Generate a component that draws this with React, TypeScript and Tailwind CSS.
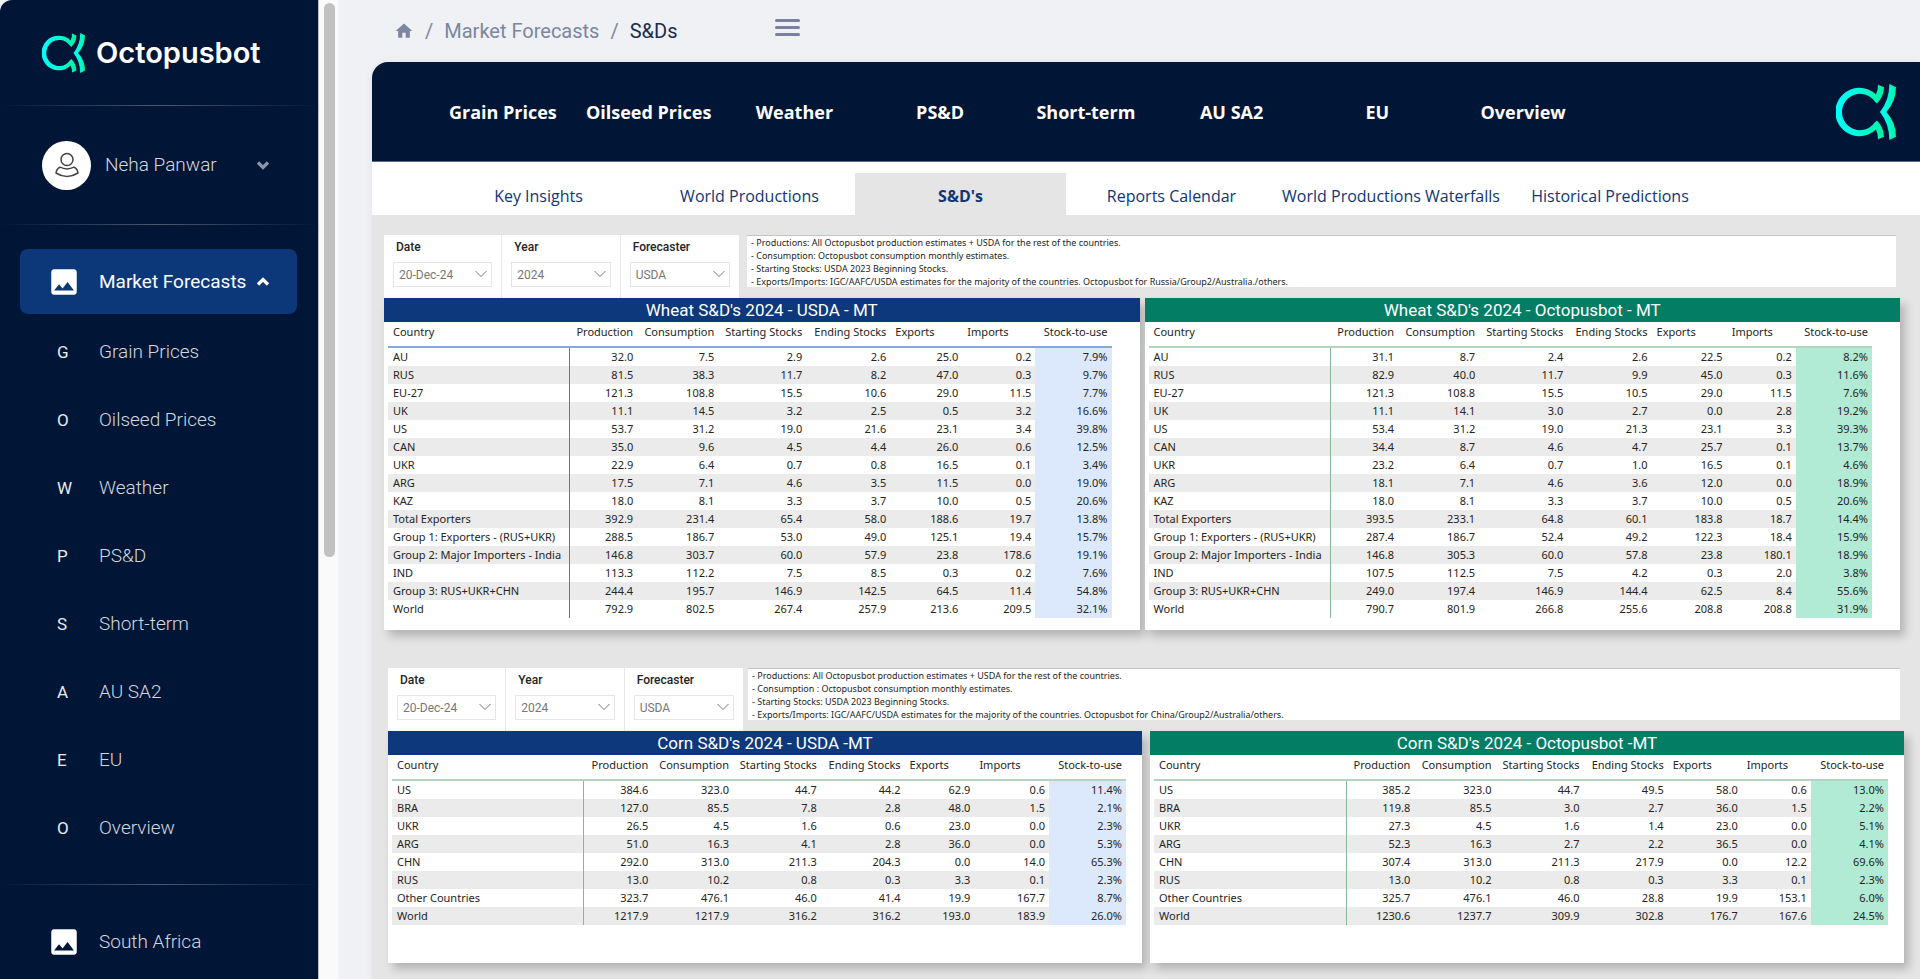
import React, { useId } from "react";
import { MdImage, MdHome } from "react-icons/md";
import { ChevronDown, ChevronUp } from "lucide-react";

type Row = [string, string, string, string, string, string, string, string];

const HEADERS = ["Country", "Production", "Consumption", "Starting Stocks", "Ending Stocks", "Exports", "Imports", "Stock-to-use"];

const WHEAT_USDA: Row[] = [
  ["AU", "32.0", "7.5", "2.9", "2.6", "25.0", "0.2", "7.9%"],
  ["RUS", "81.5", "38.3", "11.7", "8.2", "47.0", "0.3", "9.7%"],
  ["EU-27", "121.3", "108.8", "15.5", "10.6", "29.0", "11.5", "7.7%"],
  ["UK", "11.1", "14.5", "3.2", "2.5", "0.5", "3.2", "16.6%"],
  ["US", "53.7", "31.2", "19.0", "21.6", "23.1", "3.4", "39.8%"],
  ["CAN", "35.0", "9.6", "4.5", "4.4", "26.0", "0.6", "12.5%"],
  ["UKR", "22.9", "6.4", "0.7", "0.8", "16.5", "0.1", "3.4%"],
  ["ARG", "17.5", "7.1", "4.6", "3.5", "11.5", "0.0", "19.0%"],
  ["KAZ", "18.0", "8.1", "3.3", "3.7", "10.0", "0.5", "20.6%"],
  ["Total Exporters", "392.9", "231.4", "65.4", "58.0", "188.6", "19.7", "13.8%"],
  ["Group 1: Exporters - (RUS+UKR)", "288.5", "186.7", "53.0", "49.0", "125.1", "19.4", "15.7%"],
  ["Group 2: Major Importers - India", "146.8", "303.7", "60.0", "57.9", "23.8", "178.6", "19.1%"],
  ["IND", "113.3", "112.2", "7.5", "8.5", "0.3", "0.2", "7.6%"],
  ["Group 3: RUS+UKR+CHN", "244.4", "195.7", "146.9", "142.5", "64.5", "11.4", "54.8%"],
  ["World", "792.9", "802.5", "267.4", "257.9", "213.6", "209.5", "32.1%"],
];

const WHEAT_OCTO: Row[] = [
  ["AU", "31.1", "8.7", "2.4", "2.6", "22.5", "0.2", "8.2%"],
  ["RUS", "82.9", "40.0", "11.7", "9.9", "45.0", "0.3", "11.6%"],
  ["EU-27", "121.3", "108.8", "15.5", "10.5", "29.0", "11.5", "7.6%"],
  ["UK", "11.1", "14.1", "3.0", "2.7", "0.0", "2.8", "19.2%"],
  ["US", "53.4", "31.2", "19.0", "21.3", "23.1", "3.3", "39.3%"],
  ["CAN", "34.4", "8.7", "4.6", "4.7", "25.7", "0.1", "13.7%"],
  ["UKR", "23.2", "6.4", "0.7", "1.0", "16.5", "0.1", "4.6%"],
  ["ARG", "18.1", "7.1", "4.6", "3.6", "12.0", "0.0", "18.9%"],
  ["KAZ", "18.0", "8.1", "3.3", "3.7", "10.0", "0.5", "20.6%"],
  ["Total Exporters", "393.5", "233.1", "64.8", "60.1", "183.8", "18.7", "14.4%"],
  ["Group 1: Exporters - (RUS+UKR)", "287.4", "186.7", "52.4", "49.2", "122.3", "18.4", "15.9%"],
  ["Group 2: Major Importers - India", "146.8", "305.3", "60.0", "57.8", "23.8", "180.1", "18.9%"],
  ["IND", "107.5", "112.5", "7.5", "4.2", "0.3", "2.0", "3.8%"],
  ["Group 3: RUS+UKR+CHN", "249.0", "197.4", "146.9", "144.4", "62.5", "8.4", "55.6%"],
  ["World", "790.7", "801.9", "266.8", "255.6", "208.8", "208.8", "31.9%"],
];

const CORN_USDA: Row[] = [
  ["US", "384.6", "323.0", "44.7", "44.2", "62.9", "0.6", "11.4%"],
  ["BRA", "127.0", "85.5", "7.8", "2.8", "48.0", "1.5", "2.1%"],
  ["UKR", "26.5", "4.5", "1.6", "0.6", "23.0", "0.0", "2.3%"],
  ["ARG", "51.0", "16.3", "4.1", "2.8", "36.0", "0.0", "5.3%"],
  ["CHN", "292.0", "313.0", "211.3", "204.3", "0.0", "14.0", "65.3%"],
  ["RUS", "13.0", "10.2", "0.8", "0.3", "3.3", "0.1", "2.3%"],
  ["Other Countries", "323.7", "476.1", "46.0", "41.4", "19.9", "167.7", "8.7%"],
  ["World", "1217.9", "1217.9", "316.2", "316.2", "193.0", "183.9", "26.0%"],
];

const CORN_OCTO: Row[] = [
  ["US", "385.2", "323.0", "44.7", "49.5", "58.0", "0.6", "13.0%"],
  ["BRA", "119.8", "85.5", "3.0", "2.7", "36.0", "1.5", "2.2%"],
  ["UKR", "27.3", "4.5", "1.6", "1.4", "23.0", "0.0", "5.1%"],
  ["ARG", "52.3", "16.3", "2.7", "2.2", "36.5", "0.0", "4.1%"],
  ["CHN", "307.4", "313.0", "211.3", "217.9", "0.0", "12.2", "69.6%"],
  ["RUS", "13.0", "10.2", "0.8", "0.3", "3.3", "0.1", "2.3%"],
  ["Other Countries", "325.7", "476.1", "46.0", "28.8", "19.9", "153.1", "6.0%"],
  ["World", "1230.6", "1237.7", "309.9", "302.8", "176.7", "167.6", "24.5%"],
];

function LogoMark({ className }: { className: string }) {
  const id = useId();
  return (
    <svg viewBox="30 32 180 166" preserveAspectRatio="none" className={className} aria-hidden="true">
      <defs>
        <linearGradient id={id} x1="0" y1="0" x2="1" y2="0">
          <stop offset="0" stopColor="#00ffff" />
          <stop offset="0.5" stopColor="#00fbd8" />
          <stop offset="1" stopColor="#00f3a2" />
        </linearGradient>
      </defs>
      <g fill={`url(#${id})`}>
        <path d="M156 34 L174 42 Q174 68 153 90 L146 84 A54 54 0 1 0 146 146 L153 140 Q174 162 174 188 L156 196 Q156 180 150 167 A72 72 0 1 1 150 63 Q156 50 156 34Z" />
        <path d="M190 32 L210 42 Q210 84 181 115 Q210 146 210 188 L190 198 Q190 150 162 115 Q190 80 190 32Z" />
      </g>
    </svg>
  );
}

function Divider() {
  return <div className="h-px shrink-0 bg-linear-to-r from-transparent via-[#4a5873] to-transparent" />;
}

const MENU = ["Grain Prices", "Oilseed Prices", "Weather", "PS&D", "Short-term", "AU SA2", "EU", "Overview"];

function Sidebar() {
  return (
    <aside className="w-[318px] shrink-0 rounded-tl-xl bg-[#011637] text-[#d3d7df]">
      <div className="flex h-[105px] items-center gap-[11px] pl-[42px]">
        <LogoMark className="h-10 w-[43px]" />
        <span className="font-['Inter'] text-[29px] leading-8 font-semibold text-white">Octopusbot</span>
      </div>
      <Divider />
      <button type="button" className="flex h-[118px] w-full items-center pr-[45px] pl-[42px] text-left">
        <span className="flex size-[49px] items-center justify-center rounded-full bg-white">
          <svg viewBox="0 0 24 26" className="h-[26px] w-6" fill="none" stroke="#444" strokeWidth="1.5" strokeLinejoin="round" aria-hidden="true">
            <circle cx="12" cy="7.5" r="6" />
            <path d="M5 15.2 Q12 18.6 19 15.2 Q22.5 16.8 23 21 Q17.500 24.500 12 24.500 Q6.500 24.500 1 21 Q1.500 16.800 5 15.200Z" />
          </svg>
        </span>
        <span className="ml-[14px] flex-1 text-[19px] leading-6 font-light">Neha Panwar</span>
        <ChevronDown className="size-5 text-[#8a94a8]" strokeWidth={4} strokeLinecap="butt" strokeLinejoin="miter" />
      </button>
      <Divider />
      <nav className="pt-6">
        <button type="button" className="mx-5 flex h-[65px] w-[277px] items-center rounded-lg bg-[#0c3779] pl-[27px] text-left text-white">
          <MdImage className="size-[34px]" />
          <span className="ml-[18px] w-[149px] text-[19px] leading-6 whitespace-nowrap">Market Forecasts</span>
          <ChevronUp className="ml-[5px] size-5" strokeWidth={4} strokeLinecap="butt" strokeLinejoin="miter" />
        </button>
        <ul className="pt-1">
          {MENU.map((item) => (
            <li key={item}>
              <a href="#" className="flex h-[68px] items-center pl-[57px] text-[19px] leading-6 font-light">
                <span className="w-[42px] text-[17px] font-normal text-[#e9ebef]">{item[0]}</span>
                {item}
              </a>
            </li>
          ))}
        </ul>
        <div className="h-[22px]" />
        <Divider />
        <a href="#" className="mt-[19px] flex h-[75px] items-center pl-[47px] text-[19px] leading-6 font-light">
          <MdImage className="size-[34px] text-white" />
          <span className="ml-[18px]">South Africa</span>
        </a>
      </nav>
    </aside>
  );
}

function Filter({ id, label, value }: { id: string; label: string; value: string }) {
  return (
    <div className="border-r border-[#e9e9e9] px-[9px] last:border-r-0">
      <label htmlFor={id} className="block h-[27px] pl-[3px] text-[12px] leading-6 font-medium text-[#252423]">
        {label}
      </label>
      <div className="relative">
        <select id={id} defaultValue={value} className="block h-[25px] w-full appearance-none border border-[#e6e6e6] bg-white pl-[5px] text-[12px] text-[#777]">
          <option>{value}</option>
        </select>
        <svg viewBox="0 0 12 8" className="pointer-events-none absolute top-2 right-[5px] h-2 w-3" fill="none" stroke="#777" strokeWidth="1" aria-hidden="true">
          <path d="M0.500 1 L6 6.500 L11.500 1" />
        </svg>
      </div>
    </div>
  );
}

function FilterRow({ name, notes, gap }: { name: string; notes: string[]; gap: string }) {
  return (
    <div className={`flex h-[63px] ${gap}`}>
      <div className="grid w-[355px] shrink-0 grid-cols-3 bg-white">
        <Filter id={`${name}-date`} label="Date" value="20-Dec-24" />
        <Filter id={`${name}-year`} label="Year" value="2024" />
        <Filter id={`${name}-forecaster`} label="Forecaster" value="USDA" />
      </div>
      <div className="mr-1 h-[52px] flex-1 overflow-hidden border-t border-[#c4c4c4] bg-white pl-1 font-['Noto_Sans'] text-[9px] leading-[13px] text-[#252423]">
        {notes.map((note) => (
          <p key={note}>{note}</p>
        ))}
      </div>
    </div>
  );
}

type CardProps = {
  title: string;
  rows: Row[];
  widths: number[];
  green?: boolean;
  greenRule?: boolean;
  pad: string;
  tablePad: string;
};

function DataCard({ title, rows, widths, green = false, greenRule = false, pad, tablePad }: CardProps) {
  const total = widths.reduce((sum, w) => sum + w, 0);
  const line = greenRule ? "border-b-[#b3d5bf]" : "border-b-[#86a8dc]";
  const divider = greenRule ? "border-r-[#83bb96]" : "border-r-[#4a7dc9]";
  return (
    <section className={`min-w-0 bg-white shadow-[5px_6px_9px_rgba(0,0,0,0.22)] ${pad}`}>
      <h2 className={`h-6 text-center text-[17px] leading-6 text-white ${green ? "bg-[#047d65]" : "bg-[#0d387b]"}`}>{title}</h2>
      <div className={`pl-1 ${tablePad}`}>
        <table className="w-full table-fixed border-separate border-spacing-0 font-['Noto_Sans'] text-[11px] leading-4 text-[#252423]">
          <colgroup>
            {widths.map((w, i) => (
              <col key={i} style={{ width: `${(w / total) * 100}%` }} />
            ))}
          </colgroup>
          <thead>
            <tr>
              {HEADERS.map((h, i) => (
                <th
                  key={h}
                  scope="col"
                  className={`h-[26px] border-b-2 p-0 pt-[2px] pr-1 pl-[5px] align-top font-normal whitespace-nowrap ${line} ${
                    i === 0 || i === 5 || i === 6 ? "text-left" : "text-right"
                  }`}
                >
                  <span className={(i > 0 && i < 5) || i === 7 ? "float-right" : ""}>{h}</span>
                </th>
              ))}
            </tr>
          </thead>
          <tbody>
            {rows.map((row, r) => (
              <tr key={row[0]} className={r % 2 ? "bg-[#ebebeb]" : "bg-white"}>
                {row.map((cell, c) => (
                  <td
                    key={c}
                    className={`h-[18px] p-0 pr-1 pl-[5px] whitespace-nowrap ${c === 0 ? `border-r ${divider}` : "text-right"} ${
                      c === 7 ? (green ? "bg-[#b2ebd5]" : "bg-[#dce9fd]") : ""
                    }`}
                  >
                    {cell}
                  </td>
                ))}
              </tr>
            ))}
          </tbody>
        </table>
      </div>
    </section>
  );
}

const TABS = ["Key Insights", "World Productions", "S&D's", "Reports Calendar", "World Productions Waterfalls", "Historical Predictions"];

export default function App() {
  return (
    <div className="flex min-h-screen bg-[#f0f1f5] font-['Roboto',sans-serif]">
      <Sidebar />
      <div className="w-5 shrink-0 border-l border-[#b9bfcb] bg-[#fafafa] px-[5px] pt-[3px]">
        <div className="h-[554px] w-[11px] rounded-full bg-[#c1c1c1]" />
      </div>
      <div className="min-w-0 flex-1 pl-[34px]">
        <header className="flex h-[62px] items-center pl-[22px]">
          <nav aria-label="Breadcrumb" className="flex items-center gap-[11px] text-[20px] leading-6 text-[#7b86a0]">
            <a href="#" aria-label="Home">
              <MdHome className="size-5" />
            </a>
            <span>/</span>
            <a href="#">Market Forecasts</a>
            <span>/</span>
            <span className="text-[#1c2b4e]">S&amp;Ds</span>
          </nav>
          <button type="button" aria-label="Toggle menu" className="mb-2 ml-[98px] flex w-[25px] flex-col gap-1">
            <span className="h-[3px] rounded-full bg-[#7b80a0]" />
            <span className="h-[3px] rounded-full bg-[#7b80a0]" />
            <span className="h-[3px] rounded-full bg-[#7b80a0]" />
          </button>
        </header>
        <main className="overflow-hidden rounded-tl-2xl bg-[#e5e5e5] font-['Roboto'] shadow-[0_0_8px_rgba(0,0,0,0.06)]">
          <div className="flex h-[100px] items-center border-b border-[#5f6b84] bg-[#011637] pr-6 pl-[58px]">
            <nav className="grid flex-1 grid-cols-8 text-center font-['Open_Sans'] text-[18px] leading-6 font-bold text-white">
              {MENU.map((item) => (
                <a key={item} href="#" className="whitespace-nowrap">
                  {item}
                </a>
              ))}
            </nav>
            <LogoMark className="ml-[240px] h-14 w-[60px]" />
          </div>
          <nav className="grid h-[53px] grid-cols-[211fr_211fr_211fr_211fr_228fr_210fr] bg-white pt-[11px] pr-[205px] pl-[61px] text-center font-['Open_Sans'] text-[16px] text-[#0f3675]">
            {TABS.map((tab, i) => (
              <a key={tab} href="#" className={`leading-[46px] whitespace-nowrap ${i === 2 ? "bg-[#e5e5e5] font-bold" : ""}`}>
                {tab}
              </a>
            ))}
          </nav>
          <div className="pt-5 pr-5 pl-3">
            <FilterRow
              name="wheat"
              gap="gap-2"
              notes={[
                "- Productions: All Octopusbot production estimates + USDA for the rest of the countries.",
                "- Consumption: Octopusbot consumption monthly estimates.",
                "- Starting Stocks: USDA 2023 Beginning Stocks.",
                "- Exports/Imports: IGC/AAFC/USDA estimates for the majority of the countries. Octopusbot for Russia/Group2/Australia./others.",
              ]}
            />
            <div className="grid grid-cols-2 gap-[5px]">
              <DataCard title="Wheat S&D's 2024 - USDA - MT" rows={WHEAT_USDA} widths={[182, 67, 81, 88, 84, 72, 73, 76]} pad="pb-3" tablePad="pr-7" />
              <DataCard title="Wheat S&D's 2024 - Octopusbot - MT" rows={WHEAT_OCTO} widths={[182, 67, 81, 88, 84, 75, 69, 76]} green greenRule pad="pb-3" tablePad="pr-7" />
            </div>
          </div>
          <div className="pt-[38px] pr-4 pb-4 pl-4">
            <FilterRow
              name="corn"
              gap="gap-[5px]"
              notes={[
                "- Productions: All Octopusbot production estimates + USDA for the rest of the countries.",
                "- Consumption : Octopusbot consumption monthly estimates.",
                "- Starting Stocks: USDA 2023 Beginning Stocks.",
                "- Exports/Imports: IGC/AAFC/USDA estimates for the majority of the countries. Octopusbot for China/Group2/Australia/others.",
              ]}
            />
            <div className="grid grid-cols-2 gap-2">
              <DataCard title="Corn S&D's 2024 - USDA -MT" rows={CORN_USDA} widths={[193, 68, 81, 88, 84, 70, 75, 77]} greenRule pad="pb-[38px]" tablePad="pr-4" />
              <DataCard title="Corn S&D's 2024 - Octopusbot -MT" rows={CORN_OCTO} widths={[193, 67, 81, 88, 84, 74, 69, 77]} green greenRule pad="pb-[38px]" tablePad="pr-4" />
            </div>
          </div>
        </main>
      </div>
    </div>
  );
}
